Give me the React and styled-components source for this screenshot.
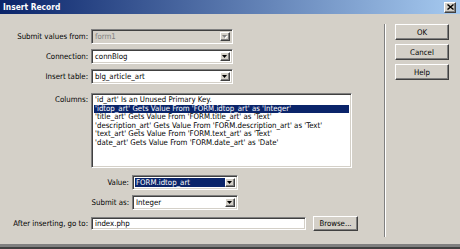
import React from 'react';
import styled, { createGlobalStyle, css } from 'styled-components';

const GlobalStyle = createGlobalStyle`
  html, body {
    margin: 0;
    padding: 0;
    background: #d4d0c8;
  }
  * {
    box-sizing: border-box;
  }
`;

const uiFont = `"DejaVu Sans Condensed", "DejaVu Sans", "Liberation Sans", sans-serif`;

const sunken = css`
  border: 1px solid;
  border-color: #808080 #ffffff #ffffff #808080;
  box-shadow: inset 1px 1px #404040, inset -1px -1px #d4d0c8;
`;

const raised = css`
  border: 1px solid;
  border-color: #ffffff #404040 #404040 #ffffff;
  box-shadow: inset -1px -1px #808080, inset 1px 1px #d4d0c8;
`;

const Dialog = styled.div`
  width: 460px;
  height: 249px;
  background: #d4d0c8;
  display: flex;
  flex-direction: column;
  font-family: ${uiFont};
  font-size: 7.8px;
  color: #000;
  border-bottom: 2px solid #404040;
  box-shadow: inset 0 -3px #808080;
  overflow: hidden;
`;

const TitleBar = styled.div`
  height: 14px;
  flex: none;
  display: flex;
  align-items: center;
  justify-content: space-between;
  padding: 0 4px 0 3px;
  background: linear-gradient(to right, #0a246a, #a6caf0);
`;

const Title = styled.span`
  color: #fff;
  font-weight: bold;
  font-size: 8.4px;
`;

const CloseButton = styled.div`
  ${raised}
  width: 12px;
  height: 11px;
  background: #d4d0c8;
  display: flex;
  align-items: center;
  justify-content: center;
`;

const Body = styled.div`
  flex: 1;
  display: flex;
`;

const Form = styled.div`
  width: 384px;
  flex: none;
  display: flex;
  flex-direction: column;
  padding-top: 15px;
`;

const Row = styled.div`
  display: flex;
  align-items: ${p => (p.$top ? 'flex-start' : 'center')};
  margin-top: ${p => p.$mt || 0}px;
`;

const Label = styled.div`
  width: ${p => p.$w}px;
  flex: none;
  text-align: right;
  padding-right: 3px;
  padding-top: ${p => p.$pt || 0}px;
  white-space: nowrap;
`;

const Select = styled.div`
  ${sunken}
  width: ${p => p.$w}px;
  height: 15px;
  padding: 2px;
  display: flex;
  background: ${p => (p.$disabled ? '#d4d0c8' : '#fff')};
`;

const SelectText = styled.div`
  flex: 1;
  display: flex;
  align-items: center;
  padding-left: 1px;
  background: ${p => (p.$selected ? '#0a246a' : 'transparent')};
  color: ${p => (p.$selected ? '#fff' : p.$disabled ? '#808080' : '#000')};
  white-space: nowrap;
`;

const DropButton = styled.div`
  ${raised}
  width: 10px;
  flex: none;
  background: #d4d0c8;
  display: flex;
  align-items: center;
  justify-content: center;
`;

const ListBox = styled.div`
  ${sunken}
  width: 261px;
  height: 75px;
  padding: 2px;
  background: #fff;
`;

const ListItem = styled.div`
  height: 8.5px;
  line-height: 8.5px;
  padding-left: 1px;
  white-space: nowrap;
  background: ${p => (p.$selected ? '#0a246a' : 'transparent')};
  color: ${p => (p.$selected ? '#fff' : '#000')};
`;

const TextInput = styled.div`
  ${sunken}
  width: 215px;
  height: 13px;
  padding: 0 3px;
  display: flex;
  align-items: center;
  background: #fff;
`;

const Button = styled.div`
  ${raised}
  width: ${p => p.$w}px;
  height: ${p => p.$h || 16}px;
  margin-left: ${p => p.$ml || 0}px;
  background: #d4d0c8;
  display: flex;
  align-items: center;
  justify-content: center;
  flex: none;
`;

const Separator = styled.div`
  width: 2px;
  flex: none;
  margin-top: 10px;
  height: 213px;
  border-left: 1px solid #808080;
  border-right: 1px solid #ffffff;
`;

const ButtonColumn = styled.div`
  display: flex;
  flex-direction: column;
  gap: 4px;
  padding: 10px 0 0 9px;
`;

const Arrow = ({ disabled }) => (
  <svg width="6" height="4" viewBox="0 0 6 4">
    {disabled && <polygon points="1,1 6,1 3.5,4" fill="#fff" />}
    <polygon points="0,0 5,0 2.5,3" fill={disabled ? '#808080' : '#000'} />
  </svg>
);

const Dropdown = ({ width, value, disabled, selected }) => (
  <Select $w={width} $disabled={disabled}>
    <SelectText $selected={selected} $disabled={disabled}>{value}</SelectText>
    <DropButton>
      <Arrow disabled={disabled} />
    </DropButton>
  </Select>
);

const columns = [
  "'id_art' Is an Unused Primary Key.",
  "'idtop_art' Gets Value From 'FORM.idtop_art' as 'Integer'",
  "'title_art' Gets Value From 'FORM.title_art' as 'Text'",
  "'description_art' Gets Value From 'FORM.description_art' as 'Text'",
  "'text_art' Gets Value From 'FORM.text_art' as 'Text'",
  "'date_art' Gets Value From 'FORM.date_art' as 'Date'",
];

export default function App() {
  return (
    <>
      <GlobalStyle />
      <Dialog>
        <TitleBar>
          <Title>Insert Record</Title>
          <CloseButton>
            <svg width="7" height="6" viewBox="0 0 7 6">
              <path d="M0.5 0.5 L6.5 5.5 M6.5 0.5 L0.5 5.5" stroke="#000" strokeWidth="1.4" />
            </svg>
          </CloseButton>
        </TitleBar>
        <Body>
          <Form>
            <Row>
              <Label $w={91}>Submit values from:</Label>
              <Dropdown width={142} value="form1" disabled />
            </Row>
            <Row $mt={5}>
              <Label $w={91}>Connection:</Label>
              <Dropdown width={142} value="connBlog" />
            </Row>
            <Row $mt={5}>
              <Label $w={91}>Insert table:</Label>
              <Dropdown width={142} value="blg_article_art" />
            </Row>
            <Row $mt={9} $top>
              <Label $w={91} $pt={2}>Columns:</Label>
              <ListBox>
                {columns.map((c, i) => (
                  <ListItem key={c} $selected={i === 1}>{c}</ListItem>
                ))}
              </ListBox>
            </Row>
            <Row $mt={7}>
              <Label $w={132}>Value:</Label>
              <Dropdown width={106} value="FORM.idtop_art" selected />
            </Row>
            <Row $mt={5}>
              <Label $w={132}>Submit as:</Label>
              <Dropdown width={106} value="Integer" />
            </Row>
            <Row $mt={6}>
              <Label $w={91}>After inserting, go to:</Label>
              <TextInput>index.php</TextInput>
              <Button $w={45} $h={15} $ml={7}>Browse...</Button>
            </Row>
          </Form>
          <Separator />
          <ButtonColumn>
            <Button $w={54}>OK</Button>
            <Button $w={54}>Cancel</Button>
            <Button $w={54}>Help</Button>
          </ButtonColumn>
        </Body>
      </Dialog>
    </>
  );
}
